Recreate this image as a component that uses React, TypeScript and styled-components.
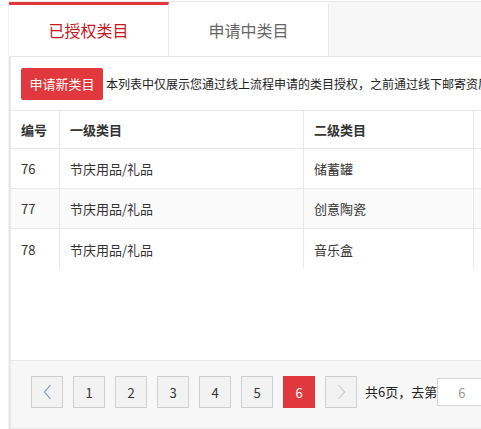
import React from 'react';
import styled, { createGlobalStyle } from 'styled-components';

const GlobalStyle = createGlobalStyle`
  html, body {
    margin: 0;
    padding: 0;
    overflow: hidden;
    background: #fff;
  }
  body {
    font-family: "Noto Sans CJK SC", "Liberation Sans", sans-serif;
    color: #333;
  }
`;

const RED = '#e0383d';
const LINE = '#e8e8e8';

const rows = [
  { id: 76, first: '节庆用品/礼品', second: '储蓄罐' },
  { id: 77, first: '节庆用品/礼品', second: '创意陶瓷' },
  { id: 78, first: '节庆用品/礼品', second: '音乐盒' },
];

const Chevron = ({ dir, color }: { dir: 'left' | 'right'; color: string }) => (
  <svg width="9" height="16" viewBox="0 0 9 16" fill="none">
    <path
      d={dir === 'left' ? 'M7.5 1 L1.5 8 L7.5 15' : 'M1.5 1 L7.5 8 L1.5 15'}
      stroke={color}
      strokeWidth="1.1"
    />
  </svg>
);

const App = () => {
  return (
    <Page>
      <GlobalStyle />
      <TabBar>
        <Tab active>已授权类目</Tab>
        <Tab>申请中类目</Tab>
      </TabBar>
      <Panel>
        <Toolbar>
          <PrimaryButton>申请新类目</PrimaryButton>
          <Notice>本列表中仅展示您通过线上流程申请的类目授权，之前通过线下邮寄资质申请的类目授权请联系客服查询</Notice>
        </Toolbar>
        <TableArea>
          <Row header>
            <Cell>编号</Cell>
            <Cell>一级类目</Cell>
            <Cell>二级类目</Cell>
            <Cell />
          </Row>
          {rows.map((r, i) => (
            <Row key={r.id} striped={i % 2 === 1}>
              <Cell>{r.id}</Cell>
              <Cell>{r.first}</Cell>
              <Cell>{r.second}</Cell>
              <Cell />
            </Row>
          ))}
        </TableArea>
        <Pager>
          <PageBtn>
            <Chevron dir="left" color="#7d93ab" />
          </PageBtn>
          {[1, 2, 3, 4, 5, 6].map((n) => (
            <PageBtn key={n} current={n === 6}>
              {n}
            </PageBtn>
          ))}
          <PageBtn>
            <Chevron dir="right" color="#c4c4c4" />
          </PageBtn>
          <PagerText>共6页，去第</PagerText>
          <JumpInput defaultValue="6" />
        </Pager>
      </Panel>
    </Page>
  );
};

const Page = styled.div`
  width: 760px;
  height: 429px;
  margin-left: 8px;
  border-left: 1px solid #f1f1f1;
  display: flex;
  flex-direction: column;
  box-sizing: border-box;
`;

const TabBar = styled.div`
  display: flex;
  margin-top: 1px;
  height: 56px;
  box-sizing: border-box;
  border-top: 1px solid ${LINE};
  border-bottom: 1px solid ${LINE};
  background: #f7f7f7;
`;

const Tab = styled.div<{ active?: boolean }>`
  width: 160px;
  box-sizing: border-box;
  background: #fff;
  border-top: 3px solid ${(p) => (p.active ? RED : '#fff')};
  border-right: 1px solid ${LINE};
  display: flex;
  align-items: center;
  justify-content: center;
  font-size: 16px;
  color: ${(p) => (p.active ? '#c8161e' : '#666')};
  padding-bottom: 1px;
`;

const Panel = styled.div`
  flex: 1;
  display: flex;
  flex-direction: column;
  border-left: 2px solid ${LINE};
  min-height: 0;
`;

const Toolbar = styled.div`
  display: flex;
  align-items: center;
  height: 53px;
  padding: 0 0 0 10px;
  gap: 3px;
  white-space: nowrap;
`;

const PrimaryButton = styled.div`
  width: 82px;
  height: 32px;
  border-radius: 2px;
  background: ${RED};
  color: #fff;
  font-size: 13px;
  display: flex;
  align-items: center;
  justify-content: center;
`;

const Notice = styled.span`
  font-size: 12px;
  color: #222;
`;

const TableArea = styled.div`
  flex: 1;
  border-top: 1px solid ${LINE};
`;

const Row = styled.div<{ header?: boolean; striped?: boolean }>`
  display: grid;
  grid-template-columns: 49px 244px 170px 1fr;
  height: ${(p) => (p.header ? 37 : 39)}px;
  border-bottom: 1px solid ${LINE};
  background: ${(p) => (p.striped ? '#fafafa' : '#fff')};
  font-size: 13px;
  font-weight: ${(p) => (p.header ? 'bold' : 'normal')};
  color: #333;
  &:last-child {
    border-bottom: none;
    height: 40px;
  }
`;

const Cell = styled.div`
  display: flex;
  align-items: center;
  padding-left: 10px;
  border-right: 1px solid ${LINE};
  &:last-child {
    border-right: none;
  }
`;

const Pager = styled.div`
  height: 69px;
  box-sizing: border-box;
  border-top: 1px solid ${LINE};
  border-bottom: 1px solid ${LINE};
  background: #f7f7f7;
  display: flex;
  align-items: flex-start;
  padding: 15px 0 0 20px;
  gap: 10px;
  white-space: nowrap;
`;

const PageBtn = styled.div<{ current?: boolean }>`
  width: 32px;
  height: 32px;
  box-sizing: border-box;
  border: 1px solid ${(p) => (p.current ? RED : '#cfcfcf')};
  background: ${(p) => (p.current ? RED : '#f2f2f2')};
  color: ${(p) => (p.current ? '#fff' : '#333')};
  font-size: 13px;
  display: flex;
  align-items: center;
  justify-content: center;
`;

const PagerText = styled.span`
  font-size: 13px;
  line-height: 32px;
  color: #222;
  margin-left: -2px;
`;

const JumpInput = styled.input`
  width: 90px;
  height: 28px;
  margin: 2px 0 0 -10px;
  box-sizing: border-box;
  border: 1px solid #d4d4d4;
  background: #fff;
  padding: 0 0 0 20px;
  font-size: 13px;
  color: #999;
  font-family: inherit;
  outline: none;
`;

export default App;
